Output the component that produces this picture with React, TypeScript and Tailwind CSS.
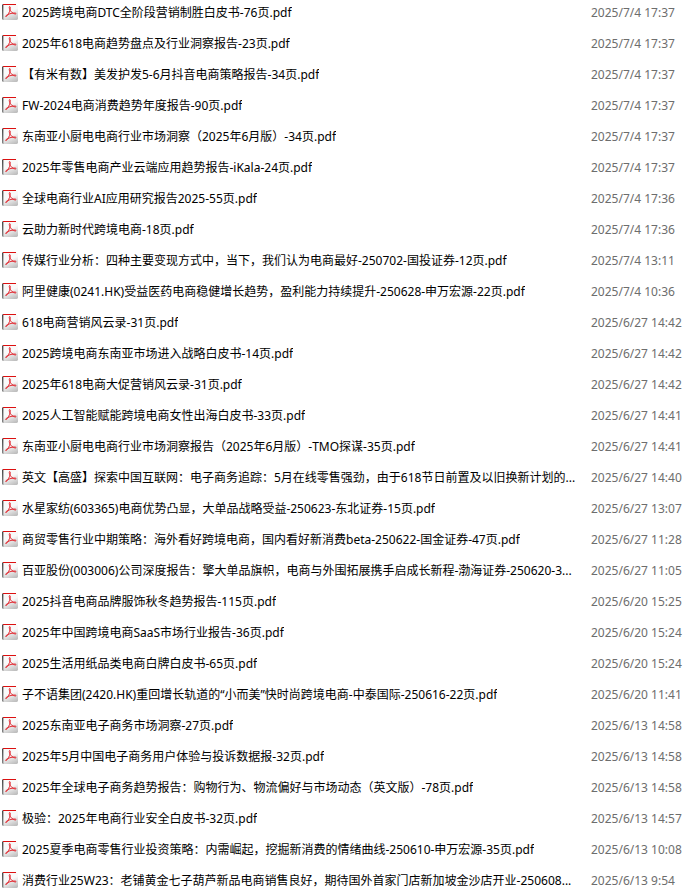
interface FileEntry {
  name: string;
  modified: string;
}

const files: FileEntry[] = [
  { name: "2025跨境电商DTC全阶段营销制胜白皮书-76页.pdf", modified: "2025/7/4 17:37" },
  { name: "2025年618电商趋势盘点及行业洞察报告-23页.pdf", modified: "2025/7/4 17:37" },
  { name: "【有米有数】美发护发5-6月抖音电商策略报告-34页.pdf", modified: "2025/7/4 17:37" },
  { name: "FW-2024电商消费趋势年度报告-90页.pdf", modified: "2025/7/4 17:37" },
  { name: "东南亚小厨电电商行业市场洞察（2025年6月版）-34页.pdf", modified: "2025/7/4 17:37" },
  { name: "2025年零售电商产业云端应用趋势报告-iKala-24页.pdf", modified: "2025/7/4 17:37" },
  { name: "全球电商行业AI应用研究报告2025-55页.pdf", modified: "2025/7/4 17:36" },
  { name: "云助力新时代跨境电商-18页.pdf", modified: "2025/7/4 17:36" },
  { name: "传媒行业分析：四种主要变现方式中，当下，我们认为电商最好-250702-国投证券-12页.pdf", modified: "2025/7/4 13:11" },
  { name: "阿里健康(0241.HK)受益医药电商稳健增长趋势，盈利能力持续提升-250628-申万宏源-22页.pdf", modified: "2025/7/4 10:36" },
  { name: "618电商营销风云录-31页.pdf", modified: "2025/6/27 14:42" },
  { name: "2025跨境电商东南亚市场进入战略白皮书-14页.pdf", modified: "2025/6/27 14:42" },
  { name: "2025年618电商大促营销风云录-31页.pdf", modified: "2025/6/27 14:42" },
  { name: "2025人工智能赋能跨境电商女性出海白皮书-33页.pdf", modified: "2025/6/27 14:41" },
  { name: "东南亚小厨电电商行业市场洞察报告（2025年6月版）-TMO探谋-35页.pdf", modified: "2025/6/27 14:41" },
  { name: "英文【高盛】探索中国互联网：电子商务追踪：5月在线零售强劲，由于618节日前置及以旧换新计划的...", modified: "2025/6/27 14:40" },
  { name: "水星家纺(603365)电商优势凸显，大单品战略受益-250623-东北证券-15页.pdf", modified: "2025/6/27 13:07" },
  { name: "商贸零售行业中期策略：海外看好跨境电商，国内看好新消费beta-250622-国金证券-47页.pdf", modified: "2025/6/27 11:28" },
  { name: "百亚股份(003006)公司深度报告：擎大单品旗帜，电商与外围拓展携手启成长新程-渤海证券-250620-3...", modified: "2025/6/27 11:05" },
  { name: "2025抖音电商品牌服饰秋冬趋势报告-115页.pdf", modified: "2025/6/20 15:25" },
  { name: "2025年中国跨境电商SaaS市场行业报告-36页.pdf", modified: "2025/6/20 15:24" },
  { name: "2025生活用纸品类电商白牌白皮书-65页.pdf", modified: "2025/6/20 15:24" },
  { name: "子不语集团(2420.HK)重回增长轨道的“小而美”快时尚跨境电商-中泰国际-250616-22页.pdf", modified: "2025/6/20 11:41" },
  { name: "2025东南亚电子商务市场洞察-27页.pdf", modified: "2025/6/13 14:58" },
  { name: "2025年5月中国电子商务用户体验与投诉数据报-32页.pdf", modified: "2025/6/13 14:58" },
  { name: "2025年全球电子商务趋势报告：购物行为、物流偏好与市场动态（英文版）-78页.pdf", modified: "2025/6/13 14:58" },
  { name: "极验：2025年电商行业安全白皮书-32页.pdf", modified: "2025/6/13 14:57" },
  { name: "2025夏季电商零售行业投资策略：内需崛起，挖掘新消费的情绪曲线-250610-申万宏源-35页.pdf", modified: "2025/6/13 10:08" },
  { name: "消费行业25W23：老铺黄金七子葫芦新品电商销售良好，期待国外首家门店新加坡金沙店开业-250608...", modified: "2025/6/13 9:54" },
];

function PdfIcon() {
  return (
    <svg viewBox="0 0 16 16" className="h-4 w-4 shrink-0" aria-hidden>
      <defs>
        <linearGradient id="page" x1="0.3" y1="0" x2="0.7" y2="1">
          <stop offset="0.45" stopColor="#f9f9f9" />
          <stop offset="1" stopColor="#c0c0c0" />
        </linearGradient>
        <linearGradient id="spine" x1="0" y1="0" x2="0" y2="1">
          <stop offset="0" stopColor="#444" />
          <stop offset="1" stopColor="#858585" />
        </linearGradient>
      </defs>
      <path d="M1 0h13l2 1.500V15l-1 1H1z" fill="url(#page)" />
      <path d="M0 1l1-1h.4v16H1l-1-1z" fill="url(#spine)" />
      <path d="M1 0h13v1H1z" fill="#dc1010" />
      <path
        d="M7.500 2.600c1-.2 1 1.300.6 3C7.500 8.300 5.700 11.600 4.400 12.500c-.8.5-1.100-.3-.3-.9C5.700 10.200 9.600 9 12.300 9c1.900 0 2.300.9 1.200 1C11.200 10.100 8.400 7.700 7.500 4.800c-.3-1-.4-1.900 0-2.200z"
        fill="none"
        stroke="#e22a32"
        strokeWidth="1"
      />
    </svg>
  );
}

function FileRow({ name, modified }: FileEntry) {
  return (
    <tr className="group">
      <td className="p-0 pb-[7px] group-last:pb-0">
        <div className="flex items-center gap-1 pl-0.5">
          <PdfIcon />
          <span className="truncate pt-0.5">{name}</span>
        </div>
      </td>
      <td className="whitespace-nowrap p-0 pb-[7px] text-[#6d6d6d] group-last:pb-0">
        <span className="block pt-0.5">{modified}</span>
      </td>
    </tr>
  );
}

export default function App() {
  return (
    <main className="overflow-hidden bg-white font-['Noto_Sans','Noto_Sans_CJK_SC',sans-serif] text-[12px] leading-[22px] text-black">
      <table className="w-full table-fixed border-collapse" aria-label="文件列表">
        <colgroup>
          <col />
          <col className="w-[109px]" />
        </colgroup>
        <tbody>
          {files.map((file) => (
            <FileRow key={file.name} {...file} />
          ))}
        </tbody>
      </table>
    </main>
  );
}
